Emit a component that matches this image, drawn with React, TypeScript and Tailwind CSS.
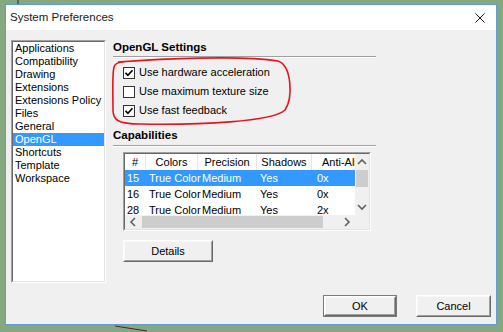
import React from 'react';

const sections = [
  'Applications',
  'Compatibility',
  'Drawing',
  'Extensions',
  'Extensions Policy',
  'Files',
  'General',
  'OpenGL',
  'Shortcuts',
  'Template',
  'Workspace',
];

const columns = [
  { title: '#', w: 'w-[21px]', pad: 'pl-[2px]' },
  { title: 'Colors', w: 'w-[52px]', pad: 'pl-[3px]' },
  { title: 'Precision', w: 'w-[59px]', pad: 'pl-[4px]' },
  { title: 'Shadows', w: 'w-[55px]', pad: 'pl-[3px]' },
  { title: 'Anti-Aliasing', w: 'w-[82px]', pad: 'pl-[5px]' },
];

const rows = [
  ['15', 'True Color', 'Medium', 'Yes', '0x'],
  ['16', 'True Color', 'Medium', 'Yes', '0x'],
  ['28', 'True Color', 'Medium', 'Yes', '2x'],
];

function Chevron({ dir }: { dir: 'up' | 'down' | 'left' | 'right' }) {
  const d = {
    up: 'M1 6 L5 2 L9 6',
    down: 'M1 2 L5 6 L9 2',
    left: 'M6 1 L2 5 L6 9',
    right: 'M2 1 L6 5 L2 9',
  }[dir];
  const vertical = dir === 'up' || dir === 'down';
  return (
    <svg
      width={vertical ? 10 : 8}
      height={vertical ? 8 : 10}
      viewBox={vertical ? '0 0 10 8' : '0 0 8 10'}
      fill="none"
      stroke="#606060"
      strokeWidth="1.6"
    >
      <path d={d} />
    </svg>
  );
}

function CheckRow({ label, checked }: { label: string; checked: boolean }) {
  return (
    <div className="h-[19px] flex items-center pl-[10px]">
      <div className="w-[12px] h-[12px] border border-[#333333] bg-white flex items-center justify-center">
        {checked && (
          <svg width="10" height="10" viewBox="0 0 10 10" fill="none" stroke="#000" strokeWidth="1.7">
            <path d="M1.5 4.8 L3.9 7.3 L8.5 2.2" />
          </svg>
        )}
      </div>
      <span className="ml-[4px] leading-[13px]">{label}</span>
    </div>
  );
}

function Button({ label, width, isDefault }: { label: string; width: string; isDefault?: boolean }) {
  return (
    <div className={`${width} h-[22px] ${isDefault ? 'border border-[#7a7a7a]' : ''}`}>
      <div className="h-full border border-t-white border-l-white border-b-[#696969] border-r-[#696969]">
        <div className="h-full flex items-center justify-center bg-[#f0f0f0] border border-t-[#f8f8f8] border-l-[#f8f8f8] border-b-[#a0a0a0] border-r-[#a0a0a0]">
          {label}
        </div>
      </div>
    </div>
  );
}

function Separator() {
  return (
    <div>
      <div className="h-px bg-[#a0a0a0]"></div>
      <div className="h-px bg-white"></div>
    </div>
  );
}

export default function App() {
  return (
    <div className="relative w-[503px] h-[332px] bg-[#86a880] overflow-hidden pl-[5px] pt-[4px] text-[11px] text-black font-['Liberation_Sans',Arial,sans-serif]">
      {/* Dialog window */}
      <div className="w-[492px] h-[321px] border border-[#5f9fd0] flex flex-col bg-[#f0f0f0]">
        {/* Title bar */}
        <div className="h-[25px] bg-white flex items-center justify-between pl-[4px] pr-[11px]">
          <span className="text-[11.5px] text-[#1a1a1a]">System Preferences</span>
          <svg width="10" height="10" viewBox="0 0 10 10" stroke="#111" strokeWidth="1">
            <path d="M0.5 0.5 L9.5 9.5 M9.5 0.5 L0.5 9.5" />
          </svg>
        </div>

        {/* Body */}
        <div className="flex-1 flex flex-col pt-[10px] px-[5px] pb-[7px]">
          <div className="flex h-[243px]">
            {/* Section list */}
            <div className="w-[95px] h-full border border-t-[#a0a0a0] border-l-[#a0a0a0] border-b-white border-r-white">
              <div className="h-full bg-white border border-t-[#696969] border-l-[#696969] border-b-[#e3e3e3] border-r-[#e3e3e3]">
                {sections.map((s) => (
                  <div
                    key={s}
                    className={`h-[13px] leading-[13px] pl-[2px] whitespace-nowrap ${
                      s === 'OpenGL' ? 'bg-[#3399ff] text-white' : ''
                    }`}
                  >
                    {s}
                  </div>
                ))}
              </div>
            </div>

            {/* Settings pane */}
            <div className="ml-[7px] w-[263px] flex flex-col">
              <div className="h-[14px] leading-[14px] font-bold text-[11.5px]">OpenGL Settings</div>
              <div className="mt-[2px]">
                <Separator />
              </div>
              <div className="mt-[5px]">
                <CheckRow label="Use hardware acceleration" checked />
                <CheckRow label="Use maximum texture size" checked={false} />
                <CheckRow label="Use fast feedback" checked />
              </div>

              <div className="mt-[8px] h-[14px] leading-[14px] font-bold text-[11.5px]">Capabilities</div>
              <div className="mt-[3px]">
                <Separator />
              </div>

              {/* Capabilities table */}
              <div className="mt-[5px] ml-[10px] w-[248px] h-[79px] border border-t-[#a0a0a0] border-l-[#a0a0a0] border-b-white border-r-white">
                <div className="h-full flex flex-col bg-white border border-t-[#696969] border-l-[#696969] border-b-[#e3e3e3] border-r-[#e3e3e3]">
                  <div className="flex h-[61px]">
                    <div className="w-[230px] overflow-hidden">
                      <div className="flex h-[16px] w-max">
                        {columns.map((c) => (
                          <div
                            key={c.title}
                            className={`${c.w} shrink-0 h-full leading-[16px] text-center border-r border-[#e5e5e5] whitespace-nowrap overflow-hidden`}
                          >
                            {c.title}
                          </div>
                        ))}
                      </div>
                      {rows.map((r, i) => (
                        <div
                          key={i}
                          className={`flex h-[16px] w-max ${i === 0 ? 'bg-[#3399ff] text-white' : ''}`}
                        >
                          {r.map((cell, j) => (
                            <div
                              key={j}
                              className={`${columns[j].w} ${columns[j].pad} shrink-0 leading-[16px] whitespace-nowrap`}
                            >
                              {cell}
                            </div>
                          ))}
                        </div>
                      ))}
                    </div>
                    {/* Vertical scrollbar */}
                    <div className="w-[14px] flex flex-col bg-[#f0f0f0]">
                      <div className="h-[16px] flex items-center justify-center">
                        <Chevron dir="up" />
                      </div>
                      <div className="flex-1">
                        <div className="h-[17px] mx-px bg-[#cdcdcd]"></div>
                      </div>
                      <div className="h-[16px] flex items-center justify-center">
                        <Chevron dir="down" />
                      </div>
                    </div>
                  </div>
                  {/* Horizontal scrollbar */}
                  <div className="flex h-[14px] bg-[#f0f0f0]">
                    <div className="w-[230px] flex">
                      <div className="w-[16px] flex items-center justify-center">
                        <Chevron dir="left" />
                      </div>
                      <div className="flex-1 py-px">
                        <div className="ml-px w-[181px] h-full bg-[#cdcdcd]"></div>
                      </div>
                      <div className="w-[16px] flex items-center justify-center">
                        <Chevron dir="right" />
                      </div>
                    </div>
                    <div className="w-[14px]"></div>
                  </div>
                </div>
              </div>

              <div className="mt-[9px] ml-[10px]">
                <Button label="Details" width="w-[90px]" />
              </div>
            </div>
          </div>

          {/* Dialog buttons */}
          <div className="mt-[12px] flex justify-end gap-[19px]">
            <Button label="OK" width="w-[74px]" isDefault />
            <Button label="Cancel" width="w-[75px]" />
          </div>
        </div>
      </div>

      {/* Hand-drawn annotation and background marks */}
      <svg className="absolute inset-0 pointer-events-none" width="503" height="332" viewBox="0 0 503 332" fill="none">
        <path
          d="M118 62 C160 59 240 55 278 61 C292 66 293 98 285 110 C272 122 200 125 140 124 C118 124 113 120 113 110 C113 95 112 75 114 67 C115 63 118 62 124 62"
          stroke="#e8141b"
          strokeWidth="1.6"
        />
        <path d="M18 0 L18 4" stroke="#1c2a4a" strokeWidth="1" />
        <path d="M115 326 L147 331" stroke="#5a2020" strokeWidth="1" />
      </svg>
    </div>
  );
}
